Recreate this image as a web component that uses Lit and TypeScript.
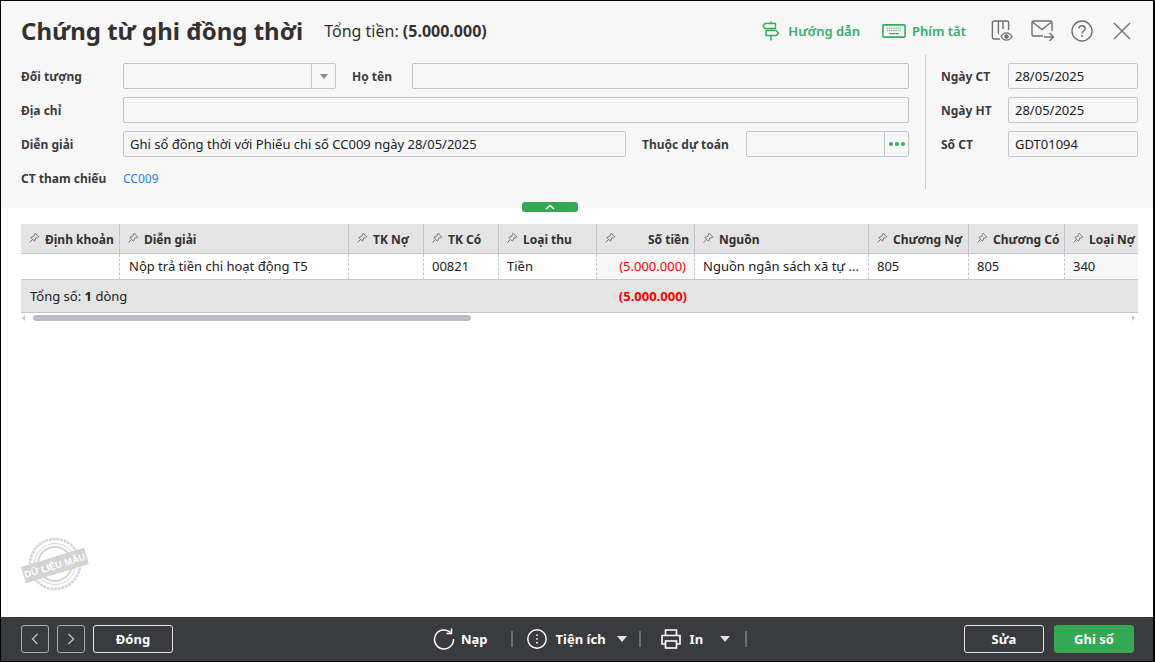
import { LitElement, html, css } from "lit";
import { customElement } from "lit/decorators.js";

const pin = html`<svg class="pin" viewBox="0 0 12 12" width="12" height="12" fill="none" stroke="#77787c" stroke-width="1"><path d="M7 1.2 10.8 5 9.6 5.6 7.6 6.2 7 8.6 6.2 9 3 5.8 3.4 5 5.8 4.4 6.4 2.4Z"/><path d="M4.4 7.6 1.4 10.6"/></svg>`;

const caret = html`<svg class="caret" viewBox="0 0 10 6" width="10" height="6"><path d="M0 0h10L5 6z" fill="#fff" opacity=".85"/></svg>`;

const cols = [
  { t: "Định khoản", v: "" },
  { t: "Diễn giải", v: "Nộp trả tiền chi hoạt động T5" },
  { t: "TK Nợ", v: "" },
  { t: "TK Có", v: "00821" },
  { t: "Loại thu", v: "Tiền" },
  { t: "Số tiền", v: "(5.000.000)", money: true },
  { t: "Nguồn", v: "Nguồn ngân sách xã tự ..." },
  { t: "Chương Nợ", v: "805" },
  { t: "Chương Có", v: "805" },
  { t: "Loại Nợ", v: "340" },
];

@customElement("app-root")
export class AppRoot extends LitElement {
  static styles = css`
    :host { display: block; height: 100vh; font-family: "Noto Sans", sans-serif; font-size: 13px; color: #212121; }
    * { box-sizing: border-box; }
    .win { position: relative; height: 662px; display: flex; flex-direction: column; background: #fff; border: solid #000; border-width: 1px 2px 1px 1px; overflow: hidden; }
    .head { background: #f7f7f8; height: 207px; padding: 0 0 0 20px; flex: none; }
    .titlebar { display: flex; align-items: center; height: 62px; padding-bottom: 3px; }
    h1 { margin: 0; font-size: 24px; line-height: 34px; font-weight: 700; color: #33302e; letter-spacing: 0; }
    .sum { margin: 0 0 0 21px; font-size: 16px; color: #33302e; }
    .sum b { font-weight: 700; }
    .tools { margin: 0 0 0 auto; display: flex; align-items: center; padding-right: 22px; }
    .tool { display: flex; align-items: center; color: #35ad6a; font-weight: 600; font-size: 13px; }
    .tool svg { display: block; }
    .t1 { gap: 8px; margin-right: 22px; }
    .t2 { gap: 6px; margin-right: 25px; }
    .ic { display: block; flex: none; }
    .ic.m17 { margin-left: 18px; }
    .ic.m18 { margin-left: 17px; }
    .ic.m20 { margin-left: 20px; }
    .form { display: flex; }
    .left { width: 888px; display: flex; flex-direction: column; gap: 8px; }
    .row { display: flex; align-items: center; height: 26px; }
    label { font-size: 12px; font-weight: 700; color: #3b3b3d; flex: none; white-space: nowrap; }
    .l1 { width: 102px; }
    .l2 { width: 60px; margin-left: 16px; }
    .l3 { width: 104px; margin-left: 16px; }
    .l4 { width: 67px; }
    .inp { height: 26px; border: 1px solid #c4c5d0; border-radius: 2px; background: #f7f7f8; padding: 0 6px; display: flex; align-items: center; font-size: 13px; color: #212121; flex: none; }
    .grow { flex: 1; }
    .w503 { width: 503px; }
    .w130 { width: 130px; }
    .combo { width: 213px; padding: 0; }
    .combo .box { flex: 1; }
    .combo .btn { width: 24px; height: 100%; border-left: 1px solid #c4c5d0; display: flex; align-items: center; justify-content: center; flex: none; }
    .est { width: 163px; padding: 0; }
    .est .box { flex: 1; }
    .est .btn { width: 24px; height: 100%; border-left: 1px solid #c4c5d0; display: flex; align-items: center; justify-content: center; gap: 2px; flex: none; }
    .dot { width: 4px; height: 4px; border-radius: 50%; background: #35ad5c; }
    .link { color: #1e88e5; font-size: 12px; }
    .divider { width: 1px; height: 134px; margin: -8px 15px 0 16px; background: #c9c9cc; flex: none; }
    .right { display: flex; flex-direction: column; gap: 8px; }
    .pill { position: absolute; left: 521px; top: 201px; width: 56px; height: 10px; border-radius: 3px; background: #34a853; display: flex; align-items: center; justify-content: center; }
    .body { flex: 1; padding: 16px 15px 0 20px; min-height: 0; }
    .grid { display: grid; grid-template-columns: 99px 229px 75px 75px 98px 98px 174px 100px 96px 73px; width: 1117px; }
    .th { height: 30px; background: #e4e4e5; border-right: 1px solid #c4c5d0; border-bottom: 1px solid #c4c5d0; display: flex; align-items: center; padding: 2px 0 0 7px; font-size: 12px; font-weight: 700; color: #33302e; white-space: nowrap; overflow: hidden; }
    .th:nth-child(10) { border-right: 0; }
    .th .pin { flex: none; margin-right: 5px; margin-top: -4px; }
    .th.r span { margin-left: auto; padding-right: 5px; }
    .td { height: 26px; border-right: 1px dashed #c4c5d0; border-bottom: 1px solid #c4c5d0; display: flex; align-items: center; padding: 0 8px 2px; font-size: 13px; color: #212121; white-space: nowrap; }
    .td:nth-child(12) { padding-left: 9px; }
    .td:nth-child(20) { border-right: 0; background: #f7f7f8; }
    .td.m { justify-content: flex-end; color: #f00; background: #f7f7f8; padding-right: 8px; }
    .foot { grid-column: 1 / -1; height: 33px; background: #e4e4e5; border-bottom: 1px solid #c4c5d0; display: grid; grid-template-columns: 576px 98px; align-items: center; font-size: 13px; }
    .foot .a { padding-left: 9px; }
    .foot b { font-weight: 700; }
    .foot .b { text-align: right; color: #f00; font-weight: 700; padding-right: 8px; }
    .scroll { width: 1117px; height: 9px; display: flex; align-items: center; gap: 7px; }
    .thumb { width: 438px; height: 6px; border-radius: 3px; background: #b9bec4; }
    .arr { width: 0; height: 0; border: 3px solid transparent; flex: none; }
    .arr.l { border-right-color: #c4c5c9; border-left-width: 0; margin-left: 1px; margin-right: 1px; }
    .arr.r { border-left-color: #c4c5c9; border-right-width: 0; margin-left: auto; margin-right: 3px; }
    .stamp { position: absolute; left: 19px; top: 535px; display: block; }
    .stamp text { font-family: "Liberation Sans", sans-serif; font-weight: 700; font-size: 9.5px; fill: #fff; }
    .bar { flex: none; height: 44px; background: #3a3b3f; display: flex; align-items: center; padding: 0 19px 0 20px; }
    .btn2 { height: 28px; border: 1px solid #e6e6e6; border-radius: 3px; color: #fff; font-weight: 700; font-size: 13px; display: flex; align-items: center; justify-content: center; flex: none; }
    .nav { width: 28px; margin-right: 8px; border-color: #a9aaad; }
    .wide { width: 80px; }
    .center { margin-left: 260px; display: flex; align-items: center; color: #fff; font-weight: 700; font-size: 13px; }
    .center svg { display: block; flex: none; }
    .sep { width: 2px; height: 16px; background: #6d6e72; flex: none; }
    .end { margin-left: auto; display: flex; gap: 10px; }
    .green { background: #34a853; border-color: #34a853; }
    .sp1 { margin: 0 14px 0 23px; }
    .sp2 { margin-right: 20px; }
    .cr1 { margin: 0 12px 0 11px; display: flex; }
    .cr2 { margin: 0 15px 0 17px; display: flex; }
    .mr6 { margin-right: 6px; }
    .mr9 { margin-right: 9px; }
  `;

  render() {
    return html`<div class="win">
      <div class="head">
        <div class="titlebar">
          <h1>Chứng từ ghi đồng thời</h1>
          <div class="sum">Tổng tiền: <b>(5.000.000)</b></div>
          <div class="tools">
            <div class="tool t1">
              <svg viewBox="0 0 18 20" width="18" height="20" fill="none" stroke="#35ad5c" stroke-width="1.5" stroke-linejoin="round"><path d="M3 2.5h10.5v5H3L1 5z"/><path d="M4 9.5h10l2.5 2.6L14 14.6H4z"/><path d="M9 .5v2M9 7.5v2M9 14.6v5"/></svg>
              <span>Hướng dẫn</span>
            </div>
            <div class="tool t2">
              <svg viewBox="0 0 24 14" width="24" height="14" fill="none"><rect x=".9" y=".9" width="22.2" height="12.2" rx="1" stroke="#35ad5c" stroke-width="1.6"/><path d="M5 4.2h14M5 6.6h14" stroke="#35ad5c" stroke-dasharray="1.2 .9"/><path d="M7 9.6h10" stroke="#35ad5c" stroke-width="1.2"/></svg>
              <span>Phím tắt</span>
            </div>
            <svg class="ic" viewBox="0 0 22 22" width="22" height="22" fill="none" stroke="#717174" stroke-width="1.4"><path d="M9 19H3a1.6 1.6 0 0 1-1.6-1.6V2.6A1.6 1.6 0 0 1 3 1h13a1.6 1.6 0 0 1 1.6 1.6V10M7.4 1v13M12 1v8"/><path d="M10 16.5c1.4-2.4 3.3-3.6 5.5-3.6s4.1 1.2 5.5 3.6c-1.4 2.4-3.3 3.6-5.5 3.6S11.400 18.900 10 16.500z" fill="#f7f7f8"/><circle cx="15.500" cy="16.500" r="2.200" fill="#717174" stroke="none"/></svg>
            <svg class="ic m17" viewBox="0 0 23 21" width="23" height="21" fill="none" stroke="#717174" stroke-width="1.4"><path d="M12 16H2.500A1.500 1.500 0 0 1 1 14.500V2.500A1.500 1.500 0 0 1 2.500 1h17A1.500 1.500 0 0 1 21 2.500V11"/><path d="M1.500 2 11 9.500 20.500 2"/><path d="M13 17h9M18.500 13l4 4-4 4"/></svg>
            <svg class="ic m18" viewBox="0 0 22 22" width="22" height="22" fill="none" stroke="#717174" stroke-width="1.4"><circle cx="11" cy="11" r="10"/><path d="M7.800 8.500A3.200 3.200 0 0 1 11 5.800c1.800 0 3.200 1.200 3.200 2.800 0 2.400-3.200 2.500-3.200 5"/><circle cx="11" cy="16" r=".9" fill="#717174" stroke="none"/></svg>
            <svg class="ic m20" viewBox="0 0 18 18" width="18" height="18" fill="none" stroke="#717174" stroke-width="1.400"><path d="M1 1l16 16M17 1 1 17"/></svg>
          </div>
        </div>
        <div class="form">
          <div class="left">
            <div class="row">
              <label class="l1">Đối tượng</label>
              <div class="inp combo"><div class="box"></div><div class="btn"><svg viewBox="0 0 8 5" width="8" height="5"><path d="M0 0h8L4 5z" fill="#88898c"/></svg></div></div>
              <label class="l2">Họ tên</label>
              <div class="inp grow"></div>
            </div>
            <div class="row">
              <label class="l1">Địa chỉ</label>
              <div class="inp grow"></div>
            </div>
            <div class="row">
              <label class="l1">Diễn giải</label>
              <div class="inp w503">Ghi sổ đồng thời với Phiếu chi số CC009 ngày 28/05/2025</div>
              <label class="l3">Thuộc dự toán</label>
              <div class="inp est"><div class="box"></div><div class="btn"><i class="dot"></i><i class="dot"></i><i class="dot"></i></div></div>
            </div>
            <div class="row">
              <label class="l1">CT tham chiếu</label>
              <span class="link">CC009</span>
            </div>
          </div>
          <div class="divider"></div>
          <div class="right">
            <div class="row"><label class="l4">Ngày CT</label><div class="inp w130">28/05/2025</div></div>
            <div class="row"><label class="l4">Ngày HT</label><div class="inp w130">28/05/2025</div></div>
            <div class="row"><label class="l4">Số CT</label><div class="inp w130">GDT01094</div></div>
          </div>
        </div>
      </div>
      <div class="pill"><svg viewBox="0 0 10 6" width="10" height="6" fill="none" stroke="#fff" stroke-width="1.500"><path d="M1 5l4-3.500L9 5"/></svg></div>
      <div class="body">
        <div class="grid">
          ${cols.map((c) => html`<div class="th ${c.money ? "r" : ""}">${pin}<span>${c.t}</span></div>`)}
          ${cols.map((c) => html`<div class="td ${c.money ? "m" : ""}"><span>${c.v}</span></div>`)}
          <div class="foot"><div class="a">Tổng số: <b>1</b> dòng</div><div class="b">(5.000.000)</div></div>
        </div>
        <div class="scroll"><i class="arr l"></i><div class="thumb"></div><i class="arr r"></i></div>
      </div>
      <svg class="stamp" viewBox="0 0 70 58" width="70" height="58" fill="none">
        <g stroke="#d6d6d6">
          <circle cx="35" cy="28" r="25" stroke-width="2.500" stroke-dasharray="3 .7"/>
          <circle cx="35" cy="28" r="20.500" stroke-width="1"/>
          <circle cx="35" cy="28" r="17" stroke-width="2"/>
        </g>
        <g transform="rotate(-17 35 30)">
          <rect x="2" y="21" width="66" height="17" fill="#d3d3d3"/>
          <text x="35" y="33" text-anchor="middle">DỮ LIỆU MẪU</text>
        </g>
      </svg>
      <div class="bar">
        <div class="btn2 nav"><svg viewBox="0 0 8 12" width="8" height="12" fill="none" stroke="#bdbec0" stroke-width="1.400"><path d="M6.500 1 1.500 6l5 5"/></svg></div>
        <div class="btn2 nav"><svg viewBox="0 0 8 12" width="8" height="12" fill="none" stroke="#bdbec0" stroke-width="1.400"><path d="M1.500 1l5 5-5 5"/></svg></div>
        <div class="btn2 wide">Đóng</div>
        <div class="center">
          <svg class="mr6" viewBox="0 0 22 22" width="22" height="22" fill="none" stroke="#fff" stroke-width="1.500"><path d="M17.500 4.500A9.500 9.500 0 1 0 20.500 11"/><path d="M18.500 .5v5h-5"/></svg>
          <span>Nạp</span>
          <i class="sep sp1"></i>
          <svg class="mr9" viewBox="0 0 20 20" width="20" height="20" fill="none" stroke="#fff" stroke-width="1.400"><circle cx="10" cy="10" r="9.200"/><path d="M10 5.500v1.300M10 9.300v1.300M10 13.100v1.300" stroke-width="1.800"/></svg>
          <span>Tiện ích</span>
          <span class="cr1">${caret}</span>
          <i class="sep sp2"></i>
          <svg class="mr9" viewBox="0 0 20 20" width="20" height="20" fill="none" stroke="#fff" stroke-width="1.600"><path d="M4.500 6V1h11v5M4.500 15H1V6.500h18V15h-3.500"/><rect x="4.500" y="12" width="11" height="7"/></svg>
          <span>In</span>
          <span class="cr2">${caret}</span>
          <i class="sep"></i>
        </div>
        <div class="end">
          <div class="btn2 wide">Sửa</div>
          <div class="btn2 wide green">Ghi sổ</div>
        </div>
      </div>
    </div>`;
  }
}
